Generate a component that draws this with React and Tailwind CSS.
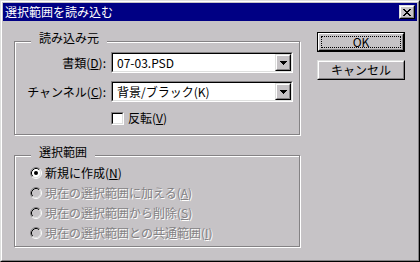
import React from 'react';

// Win9x dialog palette (16-bit colour depth)
const face = 'bg-[#c6c3c6]';

function U({ children }) {
  return <span className="underline underline-offset-[1px]">{children}</span>;
}

function Arrow() {
  return (
    <svg width="7" height="4" viewBox="0 0 7 4" shapeRendering="crispEdges">
      <rect x="0" y="0" width="7" height="1" fill="#000" />
      <rect x="1" y="1" width="5" height="1" fill="#000" />
      <rect x="2" y="2" width="3" height="1" fill="#000" />
      <rect x="3" y="3" width="1" height="1" fill="#000" />
    </svg>
  );
}

function CloseGlyph() {
  return (
    <svg width="8" height="7" viewBox="0 0 8 7" shapeRendering="crispEdges" fill="#000">
      <rect x="0" y="0" width="2" height="1" />
      <rect x="6" y="0" width="2" height="1" />
      <rect x="1" y="1" width="2" height="1" />
      <rect x="5" y="1" width="2" height="1" />
      <rect x="2" y="2" width="4" height="1" />
      <rect x="3" y="3" width="2" height="1" />
      <rect x="2" y="4" width="4" height="1" />
      <rect x="1" y="5" width="2" height="1" />
      <rect x="5" y="5" width="2" height="1" />
      <rect x="0" y="6" width="2" height="1" />
      <rect x="6" y="6" width="2" height="1" />
    </svg>
  );
}

function RaisedBox({ className = '', children }) {
  return (
    <div className={`border border-t-[#dedfde] border-l-[#dedfde] border-r-black border-b-black ${className}`}>
      <div className="flex h-full w-full items-center justify-center border border-t-white border-l-white border-r-[#848284] border-b-[#848284] bg-[#c6c3c6]">
        {children}
      </div>
    </div>
  );
}

function Combo({ value }) {
  return (
    <div className="flex h-[21px] w-[182px] border border-t-[#848284] border-l-[#848284] border-r-white border-b-white">
      <div className="flex flex-1 items-center border border-t-black border-l-black border-r-[#dedfde] border-b-[#dedfde] bg-white">
        <span className="flex-1 pl-[4px] whitespace-nowrap">{value}</span>
        <RaisedBox className="h-full w-[16px]">
          <Arrow />
        </RaisedBox>
      </div>
    </div>
  );
}

function Radio({ checked, disabled }) {
  return (
    <svg width="12" height="12" viewBox="0 0 12 12" className="shrink-0">
      <circle cx="6" cy="6" r="4.5" fill={disabled ? '#c6c3c6' : '#fff'} />
      <path d="M2.11 9.89A5.5 5.5 0 0 1 9.89 2.11" fill="none" stroke="#848284" />
      <path d="M9.89 2.11A5.5 5.5 0 0 1 2.11 9.89" fill="none" stroke="#fff" />
      <path d="M2.82 9.18A4.5 4.5 0 0 1 9.18 2.82" fill="none" stroke="#000" />
      <path d="M9.18 2.82A4.5 4.5 0 0 1 2.82 9.18" fill="none" stroke="#dedfde" />
      {checked && <circle cx="6" cy="6" r="2" fill="#000" />}
    </svg>
  );
}

function Group({ title, className = '', children }) {
  return (
    <fieldset
      className={`w-[286px] border border-[#848284] shadow-[inset_1px_1px_0_#fff,1px_1px_0_#fff] ${className}`}
    >
      <legend className={`ml-[16px] ${face} px-[8px] pb-[6px] leading-[14px]`}>{title}</legend>
      {children}
    </fieldset>
  );
}

const modes = [
  { text: '新規に作成', key: 'N', checked: true },
  { text: '現在の選択範囲に加える', key: 'A', disabled: true },
  { text: '現在の選択範囲から削除', key: 'S', disabled: true },
  { text: '現在の選択範囲との共通範囲', key: 'I', disabled: true },
];

export default function App() {
  return (
    <div className="h-[262px] w-[420px] font-['Noto_Sans_CJK_JP',sans-serif] text-[12px] leading-[14px] text-black">
      <div className="h-full border border-t-[#dedfde] border-l-[#dedfde] border-r-black border-b-black">
        <div className={`flex h-full flex-col border border-t-white border-l-white border-r-[#848284] border-b-[#848284] ${face} p-px`}>
          {/* Title bar */}
          <div className="flex h-[18px] items-center justify-between bg-[#000084] px-[2px] text-white">
            <span className="whitespace-nowrap">選択範囲を読み込む</span>
            <RaisedBox className="h-[14px] w-[16px]">
              <CloseGlyph />
            </RaisedBox>
          </div>

          {/* Body */}
          <div className="flex pl-[11px] pt-[10px]">
            <div className="flex w-[287px] flex-col">
              <Group title="読み込み元" className="h-[104px]">
                <div className="mt-[1px] flex flex-col gap-[8px]">
                  <div className="flex items-center gap-[5px]">
                    <span className="w-[91px] text-right whitespace-nowrap">
                      書類(<U>D</U>):
                    </span>
                    <Combo value="07-03.PSD" />
                  </div>
                  <div className="flex items-center gap-[5px]">
                    <span className="w-[91px] text-right whitespace-nowrap">
                      チャンネル(<U>C</U>):
                    </span>
                    <Combo value="背景/ブラック(K)" />
                  </div>
                  <div className="mt-[1px] flex items-center gap-[4px] pl-[96px]">
                    <div className="h-[13px] w-[13px] border border-t-[#848284] border-l-[#848284] border-r-white border-b-white">
                      <div className="h-full w-full border border-t-black border-l-black border-r-[#dedfde] border-b-[#dedfde] bg-white" />
                    </div>
                    <span className="whitespace-nowrap">
                      反転(<U>V</U>)
                    </span>
                  </div>
                </div>
              </Group>

              <Group title="選択範囲" className="mt-[10px] h-[102px]">
                <div className="-mt-[2px] flex flex-col pl-[15px]">
                  {modes.map((m) => (
                    <div key={m.key} className="flex h-[20px] items-center gap-[3px]">
                      <Radio checked={m.checked} disabled={m.disabled} />
                      <span
                        className={
                          m.disabled
                            ? 'whitespace-nowrap text-[#848284] [text-shadow:1px_1px_0_#fff]'
                            : 'whitespace-nowrap'
                        }
                      >
                        {m.text}(<U>{m.key}</U>)
                      </span>
                    </div>
                  ))}
                </div>
              </Group>
            </div>

            {/* Buttons */}
            <div className="ml-[16px] mt-[1px] flex w-[88px] flex-col gap-[8px]">
              <div className="h-[20px] border border-black">
                <div className="h-full border border-t-white border-l-white border-r-black border-b-black">
                  <div className="h-full border border-t-[#c6c3c6] border-l-[#c6c3c6] border-r-[#848284] border-b-[#848284] px-px pt-px">
                    <div className="flex h-[12px] items-center justify-center border border-dotted border-black">
                      OK
                    </div>
                  </div>
                </div>
              </div>
              <RaisedBox className="h-[20px]">キャンセル</RaisedBox>
            </div>
          </div>
        </div>
      </div>
    </div>
  );
}
